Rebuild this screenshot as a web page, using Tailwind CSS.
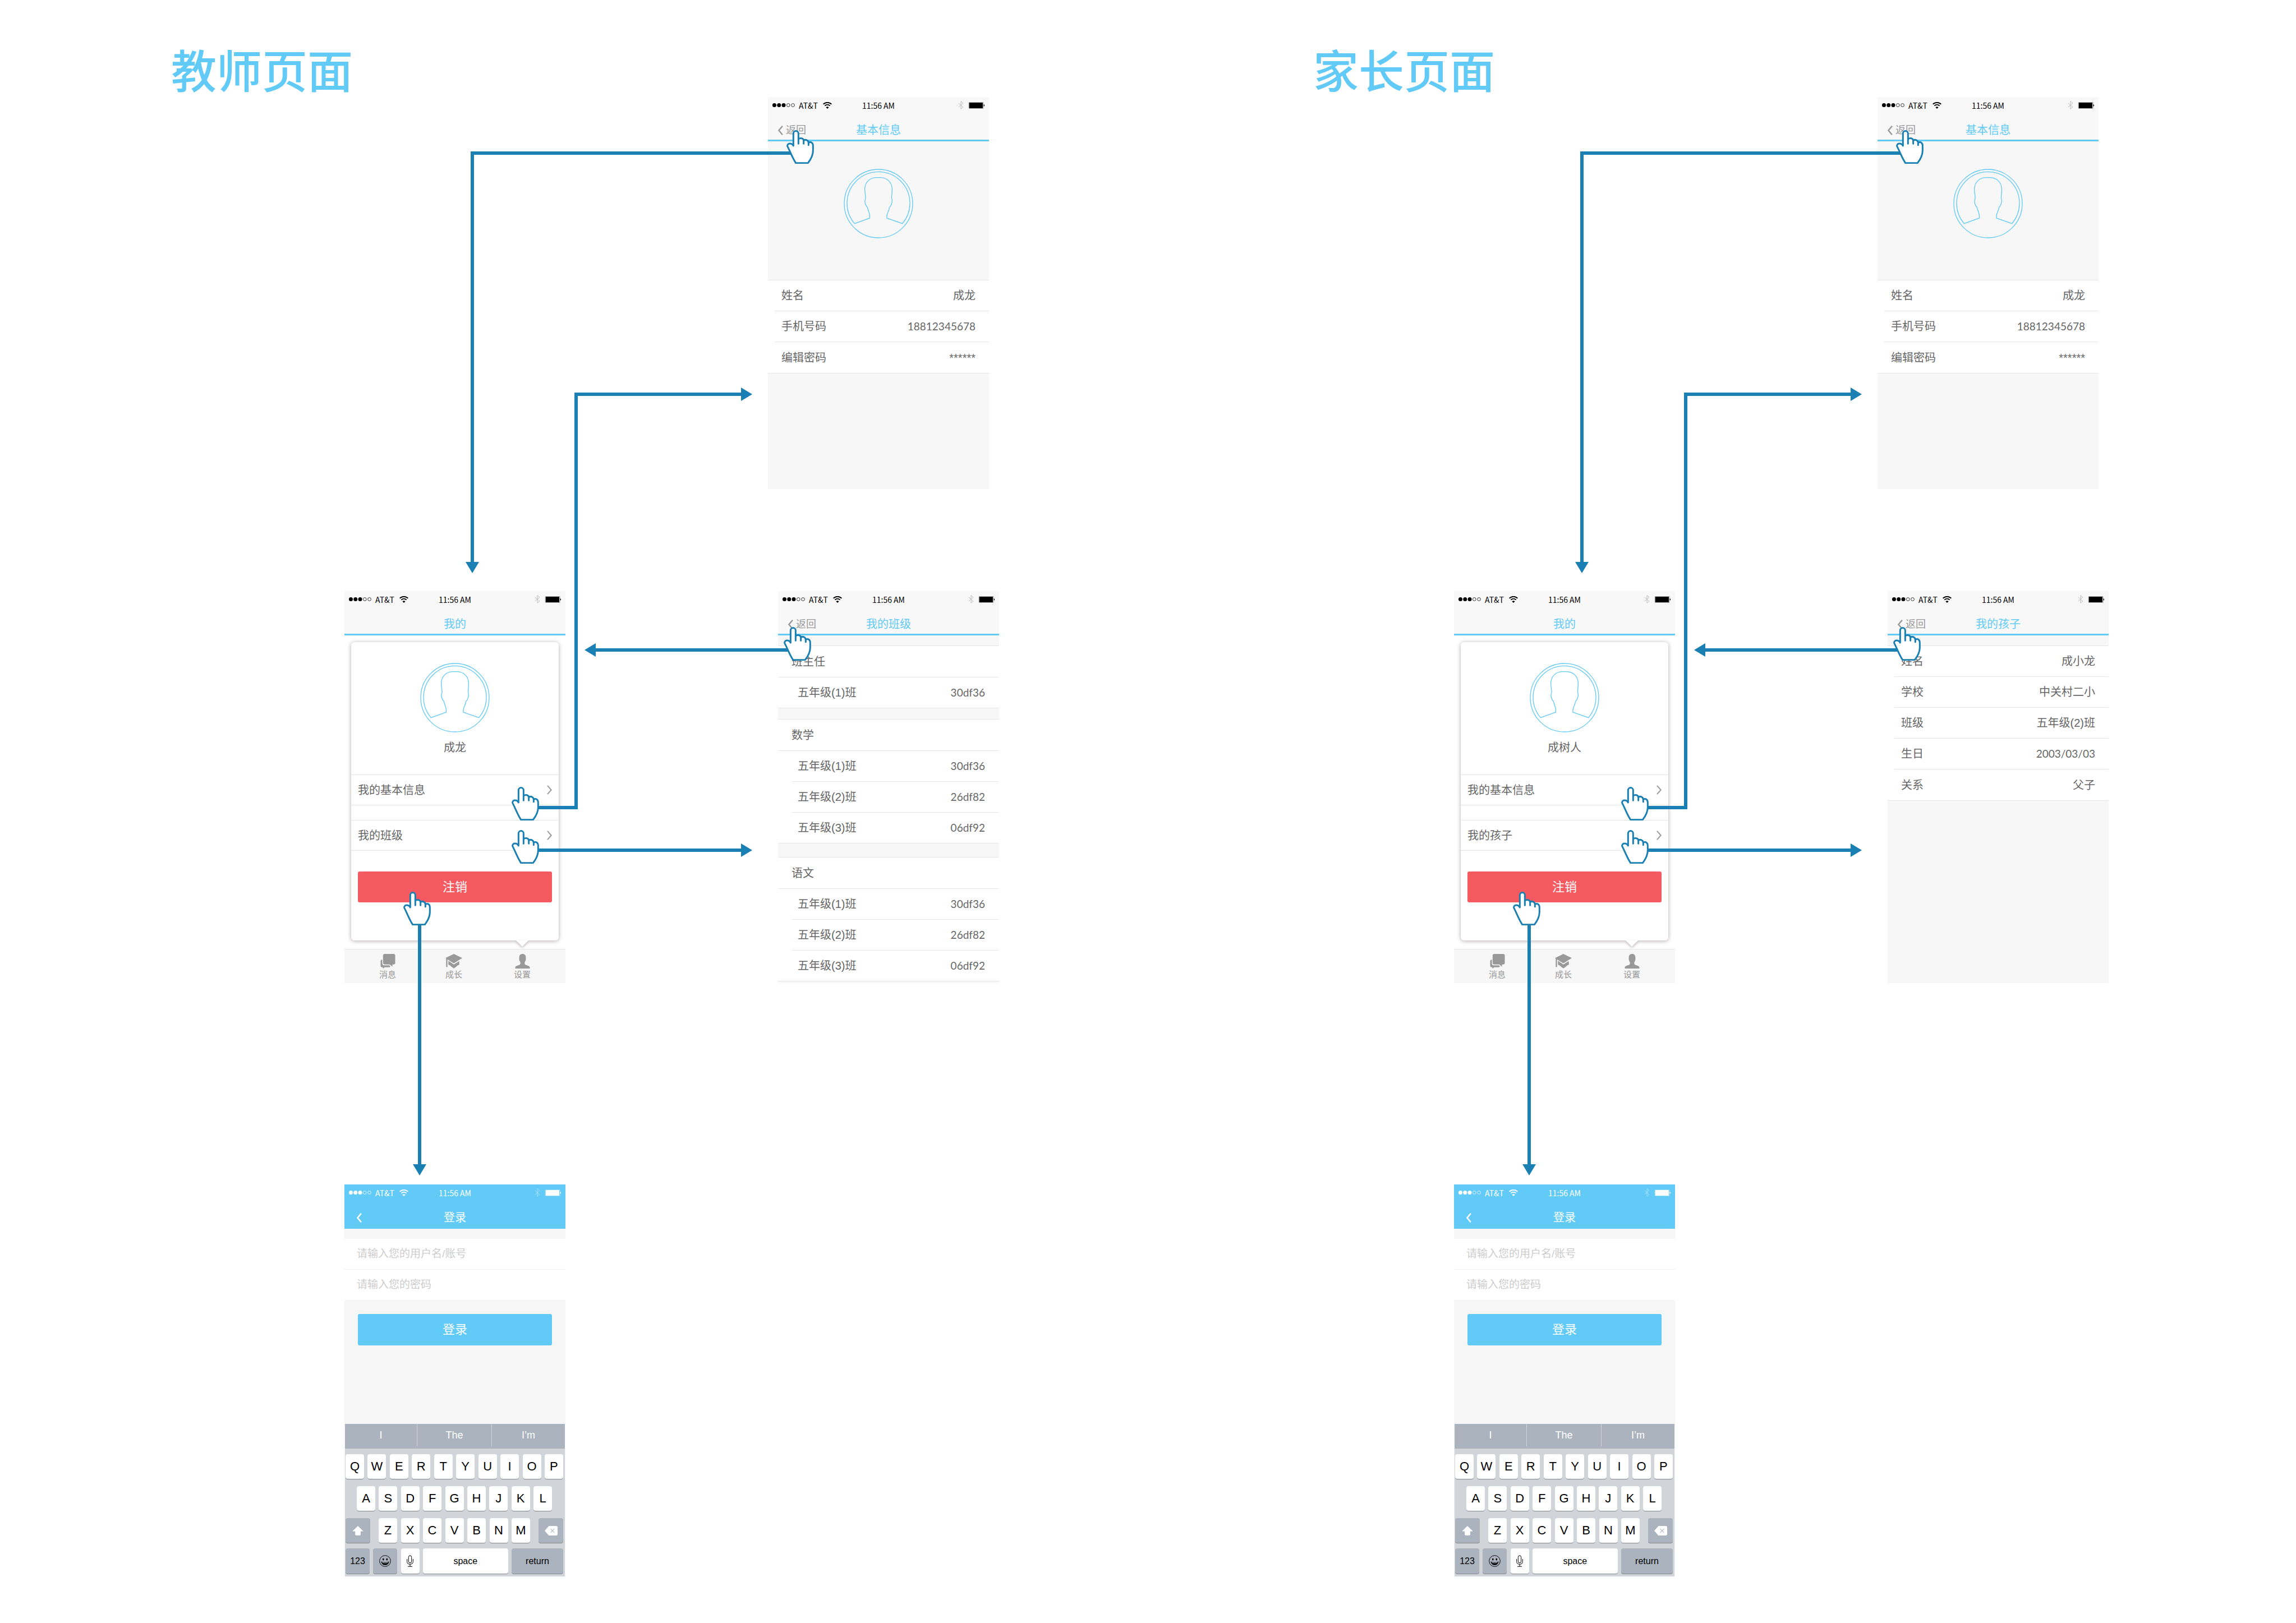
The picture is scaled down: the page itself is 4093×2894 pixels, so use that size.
<!DOCTYPE html>
<html lang="zh-CN">
<head>
<meta charset="utf-8">
<title>教师页面 / 家长页面</title>
<script src="https://cdn.jsdelivr.net/npm/@tailwindcss/browser@4"></script>
</head>
<body class="bg-white">

<svg class="hidden" aria-hidden="true">
  <symbol id="signal" viewBox="0 0 126 22">
    <circle cx="11" cy="11" r="11"/><circle cx="37" cy="11" r="11"/><circle cx="63" cy="11" r="11"/>
    <circle cx="89" cy="11" r="9" fill="none" stroke="currentColor" stroke-width="2.5"/>
    <circle cx="115" cy="11" r="9" fill="none" stroke="currentColor" stroke-width="2.5"/>
  </symbol>
  <symbol id="wifi" viewBox="0 0 48 36">
    <path d="M2 11Q24 -6 46 11" fill="none" stroke="currentColor" stroke-width="6"/>
    <path d="M10 20Q24 8 38 20" fill="none" stroke="currentColor" stroke-width="5.5"/>
    <path d="M16 28Q24 21 32 28L24 36Z"/>
  </symbol>
  <symbol id="bluetooth" viewBox="0 0 30 46">
    <path d="M2 12L27 34L15 44V2L27 12L2 34" fill="none" stroke="currentColor" stroke-width="3"/>
  </symbol>
  <symbol id="battery" viewBox="0 0 90 38">
    <rect x="1" y="1" width="83" height="36" rx="4" fill="none" stroke="currentColor" stroke-opacity=".5" stroke-width="2"/>
    <rect x="3" y="3" width="77" height="32" rx="2"/>
    <path d="M85 13Q90 15 90 19T85 25Z"/>
  </symbol>
  <symbol id="chevron-left" viewBox="0 0 26 50">
    <path d="M23 2L4 25L23 48" fill="none" stroke="currentColor" stroke-width="7"/>
  </symbol>
  <symbol id="chevron-right" viewBox="0 0 28 52">
    <path d="M3 2L24 26L3 50" fill="none" stroke="currentColor" stroke-width="6"/>
  </symbol>
  <symbol id="avatar" viewBox="-186 -186 372 372">
    <g fill="none" stroke="currentColor" stroke-width="4">
      <circle r="183"/>
      <path d="M-128 107A168 168 0 1 1 128 107L45 78C41 50 58 42 58 22C70 8 76 -10 71 -28C69 -40 74 -55 73 -80C71 -115 46 -139 10 -139H-10C-46 -139 -71 -115 -73 -80C-74 -55 -67 -40 -69 -28C-76 -10 -70 8 -58 22C-56 42 -43 50 -47 78Z"/>
    </g>
  </symbol>
  <symbol id="hand" viewBox="0 0 147 180">
    <g fill="#fff" stroke="#1a7fb2" stroke-width="9" stroke-linecap="round" stroke-linejoin="round">
      <path d="M5 86C3 70 27 66 37 84V19C37 0 64 0 64 19V48C76 40 90 44 92 55C104 48 116 55 118 67C130 61 142 66 142 84V110C142 130 135 150 115 176H50C30 145 25 125 5 86Z"/>
      <path d="M64 48V73M92 55V73M118 67V80" fill="none"/>
    </g>
  </symbol>
  <symbol id="tab-chat" viewBox="0 0 80 78">
    <path d="M23 0H70Q79 0 79 9V47Q79 56 70 56H64V68L50 56H23Q14 56 14 47V9Q14 0 23 0Z"/>
    <path d="M1 40Q1 31 10 30V50Q10 61 21 61H48L53 66Q52 71 46 71H22L13 79V71H8Q1 71 1 64Z"/>
  </symbol>
  <symbol id="tab-study" viewBox="0 0 90 78">
    <path d="M45 0L90 22L45 50L11 29V70H4V25L0 22Z"/>
    <path d="M16 37L45 56L74 38V58Q64 61 58 68L45 77L32 68Q26 61 16 58Z"/>
  </symbol>
  <symbol id="tab-user" viewBox="0 0 80 80">
    <path d="M40 0C52 0 59 8 58 20C59 32 57 38 53 44C51 49 51 56 55 59C66 63 80 66 80 74V80H0V74C0 66 14 63 25 59C29 56 29 49 27 44C23 38 21 32 22 20C21 8 28 0 40 0Z"/>
  </symbol>
  <symbol id="key-shift" viewBox="0 0 60 52">
    <path d="M30 0L60 29H45V46Q45 51 40 51H20Q15 51 15 46V29H0Z"/>
  </symbol>
  <symbol id="key-delete" viewBox="0 0 68 50">
    <path d="M22 0H60Q68 0 68 8V42Q68 50 60 50H22L0 25Z"/>
    <path d="M31 15L51 35M51 15L31 35" stroke="#abb4be" stroke-width="3"/>
  </symbol>
  <symbol id="key-emoji" viewBox="0 0 64 64">
    <circle cx="32" cy="32" r="30" fill="none" stroke="currentColor" stroke-width="3"/>
    <ellipse cx="22" cy="23" rx="4" ry="6"/><ellipse cx="42" cy="23" rx="4" ry="6"/>
    <path d="M10 34Q32 44 54 34Q50 54 32 54T10 34Z"/>
    <path d="M16 40Q32 46 48 40" stroke="#abb4be" stroke-width="3" fill="none"/>
  </symbol>
  <symbol id="key-mic" viewBox="0 0 36 62">
    <g fill="none" stroke="currentColor" stroke-width="3">
      <rect x="10" y="2" width="16" height="39" rx="8"/>
      <path d="M2 20V34Q2 48 18 48T34 34V20M18 48V60M6 60H30"/>
    </g>
  </symbol>
</svg>

<main id="board" class="grid min-h-screen grid-cols-[1978fr_2115fr] font-['Liberation_Sans','Noto_Sans_CJK_SC',sans-serif] text-[20px] leading-[24px] text-[#666]"></main>

<script>
const icon = (id, cls) => `<svg class="${cls}" fill="currentColor" aria-hidden="true"><use href="#${id}"/></svg>`;

const statusBar = (light) => `
  <div class="flex h-[29px] items-center px-[7px] font-['Noto_Sans_CJK_SC',sans-serif] text-[14px] leading-[20px] ${light ? 'text-white' : 'text-black'}">
    <div class="flex flex-1 items-center">
      ${icon('signal', 'h-[7px] w-[42px]')}
      <span class="ml-[6px]">AT&amp;T</span>
      ${icon('wifi', 'ml-[9px] h-[12px] w-[16px]')}
    </div>
    <span>11:56 AM</span>
    <div class="flex flex-1 items-center justify-end">
      ${icon('bluetooth', light ? 'mr-[8px] h-[15px] w-[10px] text-white/40' : 'mr-[8px] h-[15px] w-[10px] text-[#bbb]')}
      ${icon('battery', 'h-[12px] w-[30px]')}
    </div>
  </div>`;

const header = (title, back) => `
  <header class="border-b-[3px] border-[#62caf6] bg-[#f8f8f8]">
    ${statusBar(false)}
    <div class="grid h-[47px] grid-cols-[1fr_auto_1fr] items-end px-[18px] pb-[5px]">
      ${back ? `<a href="#" class="flex items-center gap-[5px] text-[18px] text-[#999]">${icon('chevron-left', 'h-[17px] w-[9px]')}返回</a>` : '<span></span>'}
      <h3 class="text-[#62caf6]">${title}</h3>
    </div>
  </header>`;

const field = (name, value, last, latin) => `
  <div class="flex h-[55px] items-center justify-between pr-[24px] pl-[12px] ${last ? '' : 'border-b border-[#e6e6e6]'}">
    <dt>${name}</dt><dd class="${latin ? "font-['Lato',sans-serif] text-[19px]" : ''}">${value}</dd>
  </div>`;

const basicInfo = () => `
  <article class="col-start-2 flex h-[699px] flex-col bg-[#f7f7f7]">
    ${header('基本信息', true)}
    <div class="flex h-[247px] justify-center pt-[49px] text-[#62caf6]">${icon('avatar', 'size-[124px]')}</div>
    <dl class="border-y border-[#e6e6e6] bg-white pl-[12px]">
      ${field('姓名', '成龙')}${field('手机号码', '18812345678', false, true)}${field('编辑密码', '******', true)}
    </dl>
  </article>`;

const tab = (id, name, cls) => `
  <a href="#" class="flex flex-col items-center gap-[1px] pt-[8px] text-[15px] leading-[20px]">${icon(id, cls)}${name}</a>`;

const menuRow = (name) => `
  <button class="flex h-[55px] w-full items-center justify-between border-y border-[#e6e6e6] px-[12px] text-left">
    ${name}${icon('chevron-right', 'h-[17px] w-[9px] text-[#999]')}
  </button>`;

const mine = (user, second) => `
  <article class="flex h-[699px] flex-col bg-white">
    ${header('我的', false)}
    <div class="relative mx-[12px] mt-[12px] flex h-[532px] flex-col rounded-[6px] bg-white shadow-[0_1px_7px_rgba(60,40,40,0.4)]">
      <div class="flex h-[236px] flex-col items-center pt-[37px]">
        <span class="text-[#62caf6]">${icon('avatar', 'size-[124px]')}</span>
        <span class="mt-[15px]">${user}</span>
      </div>
      ${menuRow('我的基本信息')}
      <div class="h-[26px]"></div>
      ${menuRow(second)}
      <button class="mx-[12px] mt-[37px] h-[55px] rounded-[3px] bg-[#f45a60] text-[22px] text-white">注销</button>
      <svg class="absolute top-[532px] left-[294px] h-[11px] w-[22px] drop-shadow-[0_2px_2px_rgba(60,40,40,0.35)]" viewBox="0 0 22 11"><path d="M0 0H22L11 11Z" fill="#fff"/></svg>
    </div>
    <nav class="mt-auto grid h-[61px] grid-cols-[118fr_118fr_126fr] border-t border-[#e6e6e6] bg-[#f7f7f7] pr-[14px] pl-[18px] text-[#999]">
      ${tab('tab-chat', '消息', 'h-[26px] w-[27px]')}${tab('tab-study', '成长', 'h-[26px] w-[30px]')}${tab('tab-user', '设置', 'h-[26px] w-[27px]')}
    </nav>
  </article>`;

const classRow = (name, code, border) => `
  <div class="ml-[24px] flex h-[54px] items-center justify-between pr-[25px] pl-[11px] ${border ? 'box-content border-b border-[#e6e6e6]' : ''}">
    <dt>${name}</dt><dd class="font-['Lato',sans-serif] text-[19px]">${code}</dd>
  </div>`;

const classGroup = (title, rows) => `
  <section class="border-y border-[#e6e6e6] bg-white">
    <h4 class="flex h-[56px] items-center border-b border-[#e6e6e6] px-[24px]">${title}</h4>
    <dl>${rows.map((r, i) => classRow(r[0], r[1], i < rows.length - 1)).join('')}</dl>
  </section>`;

const lessons = [['五年级(1)班', '30df36'], ['五年级(2)班', '26df82'], ['五年级(3)班', '06df92']];

const myClasses = () => `
  <article class="ml-[18px] flex h-[699px] w-[394px] flex-col bg-[#f7f7f7]">
    ${header('我的班级', true)}
    <div class="flex flex-col pt-[18px]">
      ${classGroup('班主任', lessons.slice(0, 1))}
      <div class="h-[19px]"></div>
      ${classGroup('数学', lessons)}
      <div class="h-[24px]"></div>
      ${classGroup('语文', lessons)}
    </div>
  </article>`;

const myChild = () => `
  <article class="ml-[18px] flex h-[699px] w-[394px] flex-col bg-[#f7f7f7]">
    ${header('我的孩子', true)}
    <dl class="mt-[18px] border-y border-[#e6e6e6] bg-white pl-[12px]">
      ${field('姓名', '成小龙')}${field('学校', '中关村二小')}${field('班级', '五年级(2)班')}${field('生日', '2003/03/03', false, true)}${field('关系', '父子', true)}
    </dl>
  </article>`;

const key = (label) => `<button class="h-[44px] w-[33px] rounded-[4px] bg-white text-[22px] shadow-[0_1px_0_#85888c]">${label}</button>`;
const keys = (letters) => [...letters].map(key).join('');

const login = () => `
  <article class="mt-[177px] flex h-[699px] flex-col bg-[#f6f6f6]">
    <header class="bg-[#62caf6] text-white">
      ${statusBar(true)}
      <div class="grid h-[50px] grid-cols-[1fr_auto_1fr] items-end px-[22px] pb-[8px]">
        <a href="#" aria-label="返回" class="flex h-[24px] items-center">${icon('chevron-left', 'h-[17px] w-[9px]')}</a>
        <h3>登录</h3>
      </div>
    </header>
    <form class="mt-[18px] flex flex-col text-[19px]" onsubmit="return false">
      <input type="text" aria-label="用户名/账号" placeholder="请输入您的用户名/账号" class="h-[55px] border-b border-[#f0f0f0] bg-white px-[22px] placeholder:text-[#ccc]">
      <input type="password" aria-label="密码" placeholder="请输入您的密码" class="h-[54px] bg-white px-[22px] placeholder:text-[#ccc]">
      <button class="mx-[24px] mt-[25px] h-[56px] rounded-[3px] bg-[#62caf6] text-[22px] text-white">登录</button>
    </form>
    <div class="mx-[1px] mt-auto flex h-[272px] flex-col bg-[#d1d5da] text-black">
      <div class="grid h-[44px] grid-cols-[129fr_133fr_130fr] divide-x divide-[#d1d5da] bg-[#abb4be] pb-[4px] text-[18px] text-white">
        <button>I</button><button>The</button><button>I’m</button>
      </div>
      <div class="flex flex-col gap-[13px] pt-[10px] pr-[3px] pl-[1px]">
        <div class="flex justify-between">${keys('QWERTYUIOP')}</div>
        <div class="flex justify-between px-[20px]">${keys('ASDFGHJKL')}</div>
        <div class="flex justify-between">
          <button aria-label="shift" class="flex h-[44px] w-[44px] items-center justify-center rounded-[4px] bg-[#abb4be] text-white shadow-[0_1px_0_#85888c]">${icon('key-shift', 'h-[17px] w-[20px]')}</button>
          <div class="flex w-[270px] justify-between">${keys('ZXCVBNM')}</div>
          <button aria-label="delete" class="flex h-[44px] w-[44px] items-center justify-center rounded-[4px] bg-[#abb4be] text-white shadow-[0_1px_0_#85888c]">${icon('key-delete', 'h-[17px] w-[23px]')}</button>
        </div>
      </div>
      <div class="flex justify-between pt-[10px] pr-[3px] pl-[1px] text-[16px]">
        <button class="h-[45px] w-[43px] rounded-[4px] bg-[#abb4be] shadow-[0_1px_0_#85888c]">123</button>
        <button aria-label="emoji" class="flex h-[45px] w-[43px] items-center justify-center rounded-[4px] bg-[#abb4be] shadow-[0_1px_0_#85888c]">${icon('key-emoji', 'size-[21px]')}</button>
        <button aria-label="mic" class="flex h-[45px] w-[33px] items-center justify-center rounded-[4px] bg-white shadow-[0_1px_0_#85888c]">${icon('key-mic', 'h-[21px] w-[12px]')}</button>
        <button class="h-[45px] w-[152px] rounded-[4px] bg-white shadow-[0_1px_0_#85888c]">space</button>
        <button class="h-[45px] w-[92px] rounded-[4px] bg-[#abb4be] shadow-[0_1px_0_#85888c]">return</button>
      </div>
    </div>
  </article>`;

// Connectors between screens, with a hand at each tap target.
const connectors = () => `
  <svg class="pointer-events-none absolute top-0 left-0 h-full w-full" aria-hidden="true">
    <g fill="none" stroke="#1a7fb2" stroke-width="6">
      <path d="M1412 273H842V1004"/><path d="M958 1440H1027V703H1323"/><path d="M958 1516H1323"/>
      <path d="M1407 1159H1060"/><path d="M748 1648V2078"/>
    </g>
    <g fill="#1a7fb2">
      <path d="M830 1002H854L842 1022Z"/><path d="M1321 691V715L1341 703Z"/><path d="M1321 1504V1528L1341 1516Z"/>
      <path d="M1062 1147V1171L1042 1159Z"/><path d="M736 2076H760L748 2096Z"/>
    </g>
    <use href="#hand" x="1402" y="232" width="49" height="60"/>
    <use href="#hand" x="912" y="1403" width="49" height="60"/>
    <use href="#hand" x="912" y="1480" width="49" height="60"/>
    <use href="#hand" x="719" y="1590" width="49" height="60"/>
    <use href="#hand" x="1397" y="1118" width="49" height="60"/>
  </svg>`;

const flow = (title, indent, user, second, detail) => `
  <section class="relative pt-[89px]">
    <h2 class="${indent} text-[81px] leading-[81px] font-medium text-[#62caf6]">${title}</h2>
    <div class="mt-[3px] grid grid-cols-[394px_394px] gap-x-[361px] gap-y-[182px] pl-[614px]">
      ${basicInfo()}${mine(user, second)}${detail()}${login()}
    </div>
    ${connectors()}
  </section>`;

document.getElementById('board').innerHTML =
  flow('教师页面', 'pl-[305px]', '成龙', '我的班级', myClasses) +
  flow('家长页面', 'pl-[363px]', '成树人', '我的孩子', myChild);
</script>
</body>
</html>
